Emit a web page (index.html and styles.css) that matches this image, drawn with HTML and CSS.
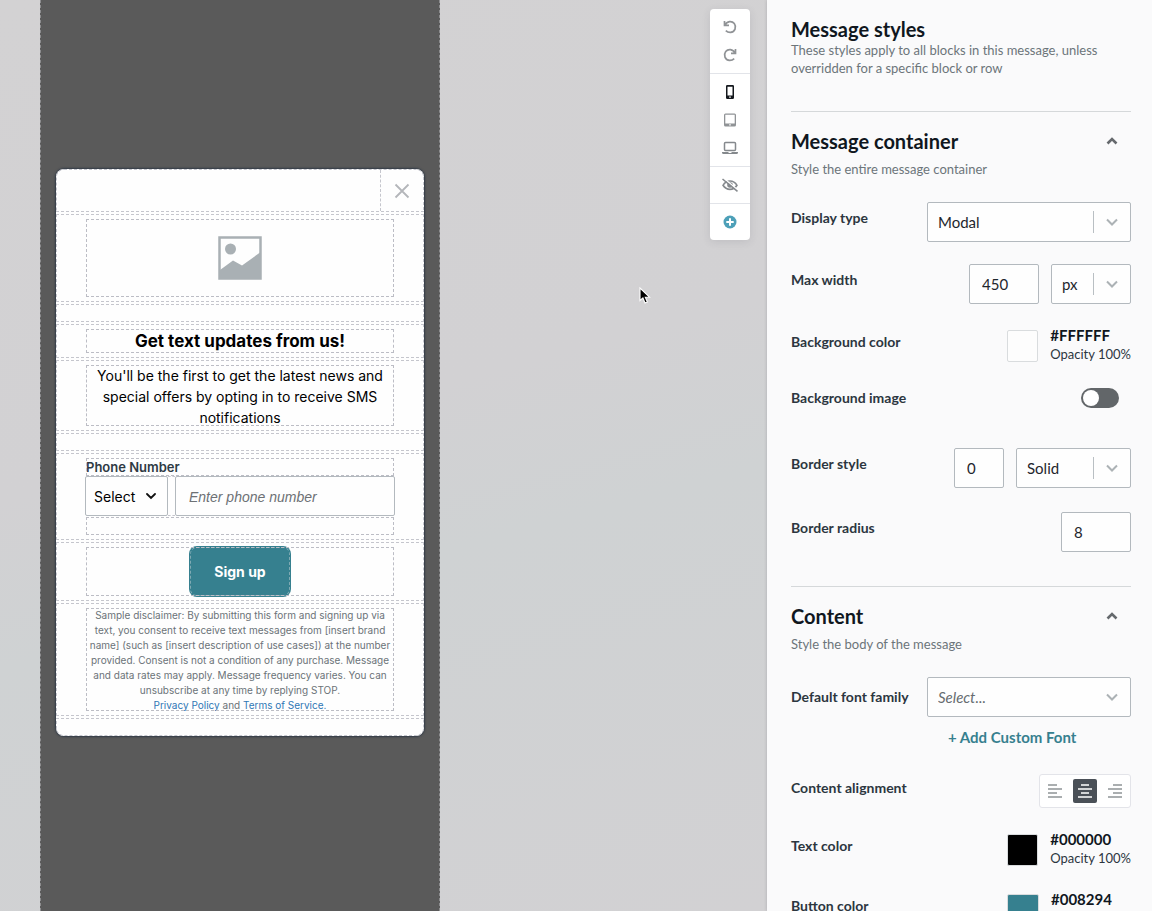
FILE: index.html
```html
<!DOCTYPE html>
<html lang="en">
<head>
<meta charset="utf-8">
<title>Message editor</title>
<link rel="stylesheet" href="styles.css">
</head>
<body>
<div class="editor">
  <main class="canvas">
    <section class="device" aria-label="Message preview">
      <div class="modal">
        <div class="row row-close">
          <button class="close" aria-label="Close"><svg width="16" height="16" viewBox="0 0 16 16"><path d="M1.500 1.500L14.500 14.500M14.500 1.500L1.500 14.500" stroke="#b4b6ba" stroke-width="1.800" fill="none"/></svg></button>
        </div>
        <div class="row">
          <div class="block block-image">
            <svg width="44" height="44" viewBox="0 0 44 44"><rect x="1.500" y="1.500" width="41" height="41" fill="#fefefe" stroke="#a9b0b4" stroke-width="2.500"/><circle cx="12.500" cy="13" r="5.500" fill="#a9b0b4"/><path d="M2 34L15 24.500L24 29.500L42 16.500V43H2Z" fill="#a9b0b4"/></svg>
          </div>
        </div>
        <div class="row row-spacer"></div>
        <div class="row"><h1 class="block headline">Get text updates from us!</h1></div>
        <div class="row"><p class="block lead">You'll be the first to get the latest news and<br>special offers by opting in to receive SMS<br>notifications</p></div>
        <div class="row row-spacer"></div>
        <div class="row">
          <label class="block phone-label" for="phone">Phone Number</label>
          <div class="phone">
            <div class="country">
              <select class="country-select" aria-label="Country code"><option>Select</option></select>
              <svg class="country-arrow" width="10" height="7" viewBox="0 0 10 7"><path d="M1 1L5 5L9 1" fill="none" stroke="#111" stroke-width="1.800" stroke-linecap="round"/></svg>
            </div>
            <span class="phone-gap"></span>
            <input class="phone-input" id="phone" type="tel" placeholder="Enter phone number">
          </div>
          <div class="block phone-error"></div>
        </div>
        <div class="row"><div class="block block-button"><button class="signup">Sign up</button></div></div>
        <div class="row"><p class="block legal">Sample disclaimer: By submitting this form and signing up via<br>text, you consent to receive text messages from [insert brand<br>name] (such as [insert description of use cases]) at the number<br>provided. Consent is not a condition of any purchase. Message<br>and data rates may apply. Message frequency varies. You can<br>unsubscribe at any time by replying STOP.<br><a href="#">Privacy Policy</a> and <a href="#">Terms of Service.</a></p></div>
        <div class="row row-spacer row-last"></div>
      </div>
    </section>

    <nav class="toolbar" aria-label="Editor tools">
      <div class="tools">
        <button class="tool" aria-label="Undo"><svg width="16" height="16" viewBox="0 0 16 16"><path d="M2.500 2V6.300H7M3 6C5 1.800 10 1.600 12.300 4.500C14.800 8 13 13 8.500 13.400C6.500 13.500 5 12.800 3.800 11.600" fill="none" stroke="#909396" stroke-width="1.700"/></svg></button>
        <button class="tool" aria-label="Redo"><svg width="16" height="16" viewBox="0 0 16 16"><path d="M13.500 2V6.300H9M13 6C11 1.800 6 1.600 3.700 4.500C1.200 8 3 13 7.500 13.400C9.500 13.500 11 12.800 12.200 11.600" fill="none" stroke="#909396" stroke-width="1.700"/></svg></button>
      </div>
      <div class="tools">
        <button class="tool" aria-label="Phone"><svg width="16" height="16" viewBox="0 0 16 16"><path fill-rule="evenodd" d="M5.300 1H10.700Q12 1 12 2.300V13.700Q12 15 10.700 15H5.300Q4 15 4 13.700V2.300Q4 1 5.300 1ZM5.500 2.800V11.500H10.500V2.800ZM7.200 12.500V13.800H8.800V12.500Z" fill="#14181d"/></svg></button>
        <button class="tool" aria-label="Tablet"><svg width="16" height="16" viewBox="0 0 16 16"><path fill-rule="evenodd" d="M3.500 1.500H12.500Q14 1.500 14 3V13Q14 14.500 12.500 14.500H3.500Q2 14.500 2 13V3Q2 1.500 3.500 1.500ZM3.300 2.800V11.500H12.700V2.800ZM7.200 12.300V13.500H8.800V12.300Z" fill="#909396"/></svg></button>
        <button class="tool" aria-label="Laptop"><svg width="16" height="16" viewBox="0 0 16 16"><rect x="2.500" y="2.500" width="11" height="8" rx="1" fill="none" stroke="#85898d" stroke-width="1.500"/><path d="M0 12H6.500V13H9.500V12H16V12.500Q16 14 14.500 14H1.500Q0 14 0 12.500Z" fill="#85898d"/></svg></button>
      </div>
      <div class="tools">
        <button class="tool" aria-label="Hide"><svg width="16" height="16" viewBox="0 0 16 16"><path d="M1 8.300C4.500 2.600 11.500 2.600 15 8.300C11.500 13.700 4.500 13.700 1 8.300Z" fill="none" stroke="#85898d" stroke-width="1.600"/><circle cx="8" cy="8" r="2.800" fill="#85898d"/><path d="M1.500 1L15.800 13" stroke="#fff" stroke-width="1.500"/><path d="M.5 2L15.500 14.300" stroke="#85898d" stroke-width="1.600"/></svg></button>
      </div>
      <div class="tools">
        <button class="tool" aria-label="Add"><svg width="16" height="16" viewBox="0 0 16 16"><circle cx="8" cy="8" r="6.500" fill="#4da0b8"/><path d="M8 4.300V11.700M4.300 8H11.700" stroke="#fff" stroke-width="2"/></svg></button>
      </div>
    </nav>
    <svg class="cursor" width="12" height="18" viewBox="0 0 12 18"><path d="M1 1V13.500L3.900 11L6 16L8.400 15L6.300 10.200H10.500Z" fill="#000" stroke="#fff" stroke-width="1.100"/></svg>
  </main>

  <aside class="panel">
    <header class="intro">
      <h2 class="title">Message styles</h2>
      <p class="hint">These styles apply to all blocks in this message, unless<br>overridden for a specific block or row</p>
    </header>

    <section class="group">
      <div class="group-head">
        <h2 class="title">Message container</h2>
        <button class="collapse" aria-label="Collapse message container"><svg width="12" height="8" viewBox="0 0 12 8"><path d="M1.500 6.500L6 2L10.500 6.500" fill="none" stroke="#65696d" stroke-width="2.600"/></svg></button>
      </div>
      <p class="hint">Style the entire message container</p>
      <div class="fields">
        <div class="field">
          <label class="name" for="display">Display type</label>
          <div class="picker picker-wide"><select id="display"><option>Modal</option></select><span class="caret"><svg width="12" height="8" viewBox="0 0 12 8"><path d="M1 1.500L6 6.500L11 1.500" fill="none" stroke="#acb2b5" stroke-width="2"/></svg></span></div>
        </div>
        <div class="field">
          <label class="name" for="maxw">Max width</label>
          <div class="controls">
            <input class="num num-mid" id="maxw" value="450">
            <div class="picker picker-small"><select aria-label="Width unit"><option>px</option></select><span class="caret"><svg width="12" height="8" viewBox="0 0 12 8"><path d="M1 1.500L6 6.500L11 1.500" fill="none" stroke="#acb2b5" stroke-width="2"/></svg></span></div>
          </div>
        </div>
        <div class="field">
          <span class="name">Background color</span>
          <div class="color"><button class="swatch swatch-white" aria-label="Background color"></button><p class="value"><strong>#FFFFFF</strong><span>Opacity 100%</span></p></div>
        </div>
        <div class="field field-toggle">
          <label class="name" for="bgimg">Background image</label>
          <input class="toggle" id="bgimg" type="checkbox" role="switch">
        </div>
        <div class="field">
          <label class="name" for="bwidth">Border style</label>
          <div class="controls">
            <input class="num num-short" id="bwidth" value="0">
            <div class="picker picker-mid"><select aria-label="Border line"><option>Solid</option></select><span class="caret"><svg width="12" height="8" viewBox="0 0 12 8"><path d="M1 1.500L6 6.500L11 1.500" fill="none" stroke="#acb2b5" stroke-width="2"/></svg></span></div>
          </div>
        </div>
        <div class="field field-radius">
          <label class="name" for="radius">Border radius</label>
          <input class="num num-mid" id="radius" value="8">
        </div>
      </div>
    </section>

    <section class="group">
      <div class="group-head">
        <h2 class="title">Content</h2>
        <button class="collapse" aria-label="Collapse content"><svg width="12" height="8" viewBox="0 0 12 8"><path d="M1.500 6.500L6 2L10.500 6.500" fill="none" stroke="#65696d" stroke-width="2.600"/></svg></button>
      </div>
      <p class="hint">Style the body of the message</p>
      <div class="fields fields-content">
        <div class="field field-font">
          <label class="name" for="family">Default font family</label>
          <div class="picker picker-wide picker-empty"><select id="family"><option>Select...</option></select><span class="caret"><svg width="12" height="8" viewBox="0 0 12 8"><path d="M1 1.500L6 6.500L11 1.500" fill="none" stroke="#acb2b5" stroke-width="2"/></svg></span></div>
        </div>
        <div class="field-extra"><button class="add-font">+ Add Custom Font</button></div>
        <div class="field field-align">
          <span class="name">Content alignment</span>
          <div class="align" role="group" aria-label="Content alignment">
            <button class="align-btn" aria-label="Left"><svg width="14" height="14" viewBox="0 0 14 14"><path d="M0 1H9M0 5H14M0 9H9M0 13H14" stroke="#8f9497" stroke-width="1.700"/></svg></button>
            <button class="align-btn align-on" aria-label="Center" aria-pressed="true"><svg width="14" height="14" viewBox="0 0 14 14"><path d="M3 1H11M0 5H14M3 9H11M0 13H14" stroke="#fff" stroke-width="1.700"/></svg></button>
            <button class="align-btn" aria-label="Right"><svg width="14" height="14" viewBox="0 0 14 14"><path d="M5 1H14M0 5H14M5 9H14M0 13H14" stroke="#8f9497" stroke-width="1.700"/></svg></button>
          </div>
        </div>
        <div class="field">
          <span class="name">Text color</span>
          <div class="color"><button class="swatch swatch-black" aria-label="Text color"></button><p class="value"><strong>#000000</strong><span>Opacity 100%</span></p></div>
        </div>
        <div class="field">
          <span class="name">Button color</span>
          <div class="color"><button class="swatch swatch-teal" aria-label="Button color"></button><p class="value"><strong>#008294</strong></p></div>
        </div>
      </div>
    </section>
  </aside>
</div>
</body>
</html>
```
FILE: styles.css
```css
* { box-sizing: border-box; }
body { margin: 0; font-family: Lato, sans-serif; }
h1, h2, p { margin: 0; }
button, input, select { font: inherit; margin: 0; }
button { padding: 0; border: 0; background: none; cursor: pointer; }
svg { display: block; }

.editor { display: flex; height: 100vh; overflow: hidden; }

/* Preview canvas */
.canvas {
  position: relative;
  flex: 1;
  display: flex;
  justify-content: space-between;
  align-items: flex-start;
  padding: 0 17px 0 40px;
  background: linear-gradient(165deg, #d3d2d3 0%, #d2d1d3 45%, #cfd2d3 60%, #d2d1d3 100%);
  font-family: Inter, sans-serif;
}
.device {
  display: flex;
  flex-direction: column;
  justify-content: center;
  width: 400px;
  height: 100%;
  padding: 0 15px 6px;
  background: #5a5a5a;
  border: 1px dashed #8e8e90;
  border-width: 0 1px;
}
.modal {
  display: flex;
  flex-direction: column;
  gap: 2px;
  border-radius: 8px;
  background: #fefefe;
  box-shadow: 0 0 2px 1px #323b47;
}
.row { padding: 4px 29px; border: 1px dashed #c5c6cd; }
.row-close { display: flex; justify-content: flex-end; padding: 0; border-radius: 8px 8px 0 0; }
.close { display: grid; place-items: center; width: 43px; height: 41px; border-left: 1px dashed #c5c6cd; }
.row-spacer { height: 18px; padding: 0; }
.row-last { border-radius: 0 0 8px 8px; }
.block { display: block; outline: 1px dashed #bcbdc5; outline-offset: -1px; }
.block-image { display: grid; place-items: center; height: 78px; }
.headline { font-size: 17px; line-height: 24px; font-weight: 700; text-align: center; color: #000; }
.lead { height: 61px; font-size: 14px; line-height: 21px; text-align: center; color: #000; white-space: nowrap; }
.phone-label { font-size: 13px; line-height: 18px; font-weight: 600; color: #2f3a44; }
.phone { display: flex; margin: 0 -1px; }
.country { position: relative; width: 83px; }
.country-select {
  appearance: none;
  width: 100%;
  height: 40px;
  padding: 0 8px;
  border: 1px solid #b3b9be;
  border-radius: 2px;
  background: #fefefe;
  color: #000;
  font-size: 14px;
}
.country-arrow { position: absolute; right: 12px; top: 17px; pointer-events: none; }
.phone-gap { width: 7px; border: 1px dashed #c5c6cd; border-width: 1px 0; }
.phone-input {
  flex: 1;
  min-width: 0;
  height: 40px;
  padding: 0 13px;
  border: 1px solid #b3b9be;
  border-radius: 2px;
  background: #fefefe;
  font-size: 14px;
}
.phone-input::placeholder { color: #6d7175; font-family: "Liberation Sans", sans-serif; font-style: italic; opacity: 1; }
.phone-error { height: 18px; margin-top: 1px; }
.block-button { display: flex; justify-content: center; height: 49px; }
.signup {
  width: 102px;
  height: 51px;
  margin: -1px 0;
  border-radius: 8px;
  background: #36808f;
  outline: 1px dashed #7fa9b3;
  outline-offset: -2px;
  color: #fff;
  font-size: 14px;
  font-weight: 700;
}
.legal { height: 103px; font-size: 10px; line-height: 15px; text-align: center; color: #6b7378; white-space: nowrap; }
.legal a { color: #2f77b5; text-decoration: none; }

.toolbar { width: 40px; margin-top: 9px; border-radius: 4px; background: #fff; box-shadow: 0 2px 8px rgba(60, 60, 70, .12); }
.tools { display: flex; flex-direction: column; padding: 4px 0; }
.tools + .tools { border-top: 1px solid #e2e4e9; }
.tool { display: grid; place-items: center; height: 28px; }
.cursor { position: absolute; left: 639px; top: 287px; }

/* Settings panel */
.panel {
  width: 385px;
  padding: 17px 21px 0 24px;
  overflow: hidden;
  background: #fafafb;
  box-shadow: 0 0 3px rgba(60, 60, 70, .25);
  z-index: 1;
  color: #2c363f;
}
.title { font-size: 20px; line-height: 24px; font-weight: 700; color: #10171e; }
.hint { font-size: 13px; line-height: 18px; color: #6c757a; }
.group { margin-top: 34px; padding-top: 17px; border-top: 1px solid #d5d8da; }
.group-head { display: flex; justify-content: space-between; align-items: center; padding-right: 13px; margin-bottom: 7px; }
.fields { display: flex; flex-direction: column; gap: 22px; margin-top: 24px; }
.fields-content { gap: 20px; }
.field { display: flex; justify-content: space-between; align-items: flex-start; min-height: 40px; }
.field-font { align-items: center; }
.field-toggle { min-height: 44px; margin-top: -6px; padding-right: 12px; }
.field-radius { margin-top: 2px; }
.field-align { min-height: 38px; }
.name { font-size: 14px; line-height: 16px; padding-top: 8px; font-weight: 700; }
.field-font .name { padding: 0; }
.controls { display: flex; gap: 12px; }
.picker { position: relative; }
.picker select, .num {
  appearance: none;
  width: 100%;
  height: 40px;
  padding: 0 10px;
  border: 1px solid #b3b9be;
  border-radius: 2px;
  background: #fefefe;
  color: #1e262d;
  font-size: 15px;
}
.num { padding: 0 12px; }
.picker-wide { width: 204px; }
.picker-mid { width: 115px; }
.picker-small { width: 80px; }
.controls .num-mid, .field .num-mid { width: 70px; }
.controls .num-short { width: 50px; }
.caret {
  position: absolute;
  top: 9px;
  right: 1px;
  display: grid;
  place-items: center;
  width: 37px;
  height: 22px;
  border-left: 1px solid #b9bfc3;
  pointer-events: none;
}
.picker-empty .caret { border-color: transparent; }
.picker-empty select { color: #666c70; font-style: italic; }
.color { display: flex; align-items: center; gap: 12px; width: 124px; height: 40px; }
.swatch { width: 32px; height: 32px; border: 1px solid #d9dcde; border-radius: 2px; }
.swatch-white { background: #fdfdfd; }
.swatch-black { background: #000; }
.swatch-teal { background: #36808f; }
.value { display: flex; flex-direction: column; height: 40px; line-height: 19px; font-size: 13px; white-space: nowrap; }
.value strong { font-size: 15px; color: #10171e; }
.toggle {
  appearance: none;
  display: flex;
  align-items: center;
  width: 38px;
  height: 20px;
  margin-top: 6px;
  padding: 0 2px;
  border-radius: 10px;
  background: #626669;
}
.toggle::before { content: ""; width: 16px; height: 16px; border-radius: 8px; background: #fff; }
.field-extra { display: flex; justify-content: flex-end; margin-top: -20px; margin-bottom: -5px; }
.add-font { width: 204px; height: 40px; padding-left: 21px; text-align: left; color: #36808f; font-size: 15px; font-weight: 700; }
.align { display: flex; gap: 6px; margin-top: 2px; padding: 4px 3px; border: 1px solid #e3e4e9; border-radius: 3px; background: #fff; }
.align-btn { display: grid; place-items: center; width: 24px; height: 24px; border-radius: 2px; }
.align-on { background: #4a5057; }
```
